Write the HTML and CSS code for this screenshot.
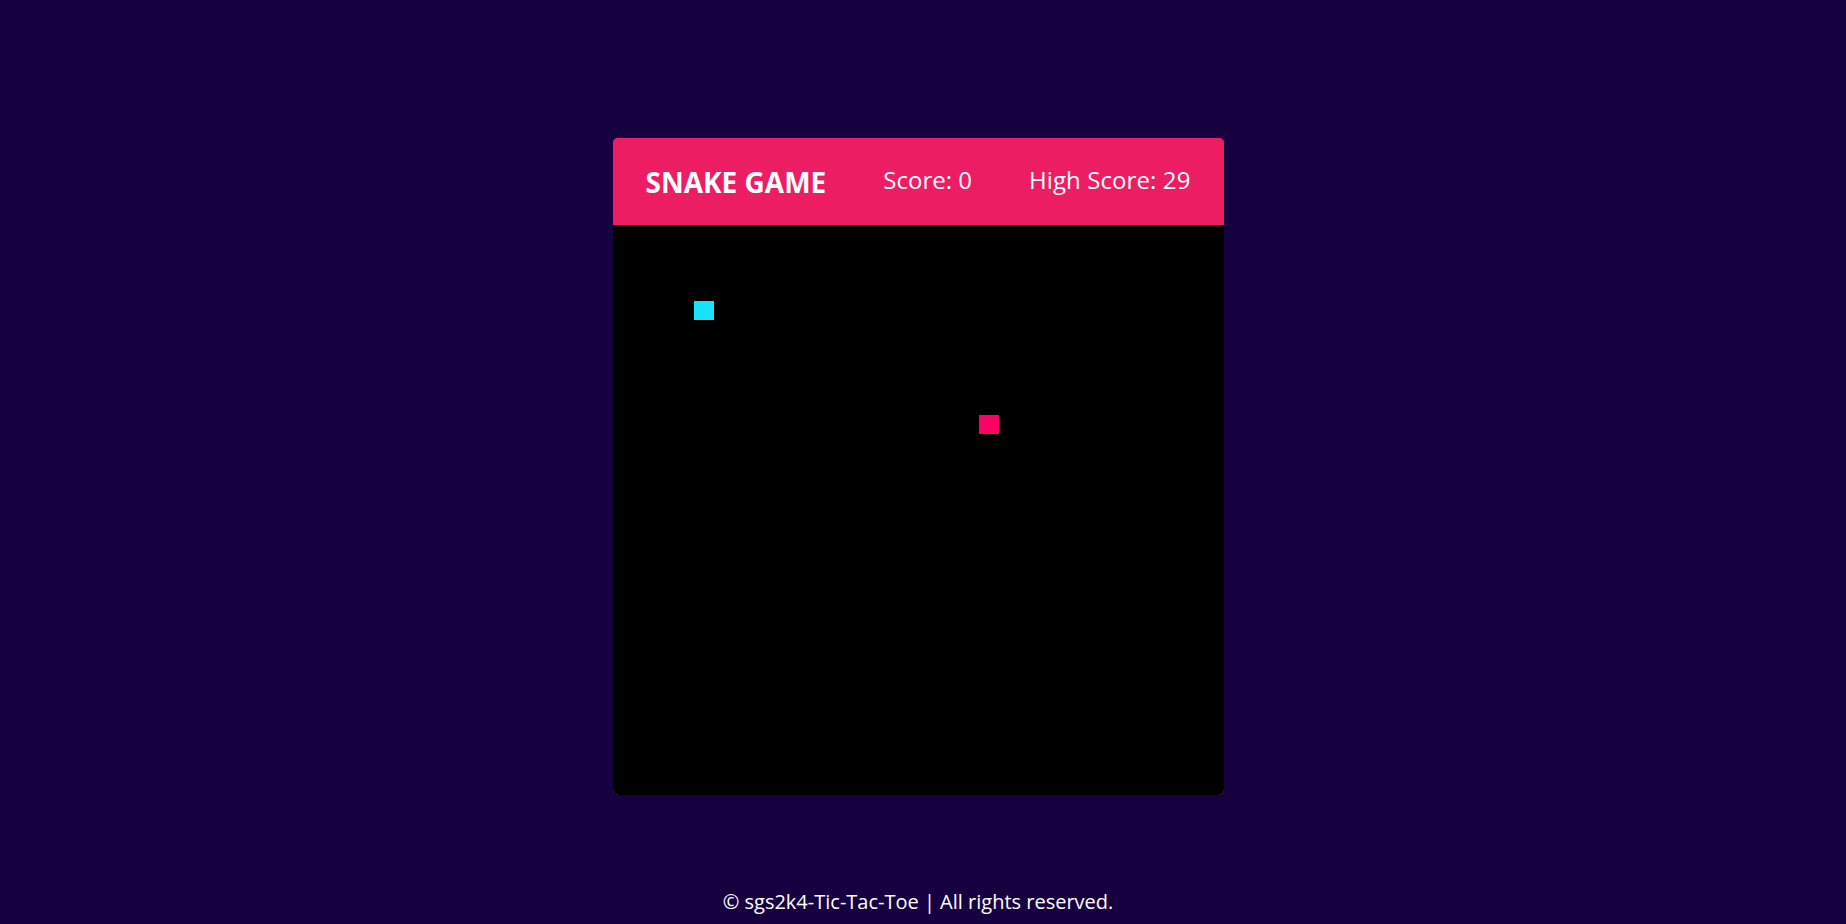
FILE: index.html
```html
<!DOCTYPE html>
<html lang="en">
<head>
<meta charset="utf-8">
<title>Snake Game</title>
<link rel="stylesheet" href="styles.css">
</head>
<body>
<main class="page">
  <div class="wrapper">
    <div class="game-details">
      <span class="title">SNAKE GAME</span>
      <span class="score">Score: 0</span>
      <span class="high-score">High Score: 29</span>
    </div>
    <div class="play-board">
      <div class="snake"></div>
      <div class="food"></div>
    </div>
  </div>
  <footer class="footer">© sgs2k4-Tic-Tac-Toe | All rights reserved.</footer>
</main>
</body>
</html>
```
FILE: styles.css
```css
* {
  box-sizing: border-box;
}
html, body {
  margin: 0;
  padding: 0;
}
body {
  background: #170040;
  font-family: "Open Sans", "Noto Sans", sans-serif;
  color: #ffffff;
}
.page {
  min-height: 924px;
  display: flex;
  flex-direction: column;
  align-items: center;
  padding-top: 138px;
  padding-right: 10px;
}
.wrapper {
  width: 611px;
  border-radius: 5px;
  overflow: hidden;
  background: #ed1d63;
}
.game-details {
  height: 87px;
  display: flex;
  align-items: center;
  justify-content: space-between;
  padding: 0 33px 0 33px;
  background: #ed1d63;
}
.title {
  font-size: 28px;
  font-weight: 700;
}
.score, .high-score {
  font-size: 24px;
  font-weight: 400;
  padding-bottom: 5px;
}
.high-score {
  letter-spacing: 0.1px;
}
.play-board {
  height: 570px;
  background: #000000;
  border-radius: 0 0 5px 5px;
  display: grid;
  grid-template-columns: repeat(30, 1fr);
  grid-template-rows: repeat(30, 1fr);
}
.snake {
  grid-area: 5 / 5;
  background: #17e3ff;
}
.food {
  grid-area: 11 / 19;
  background: #ff0068;
}
.footer {
  margin-top: 93px;
  font-size: 20px;
  line-height: 27px;
}
```
